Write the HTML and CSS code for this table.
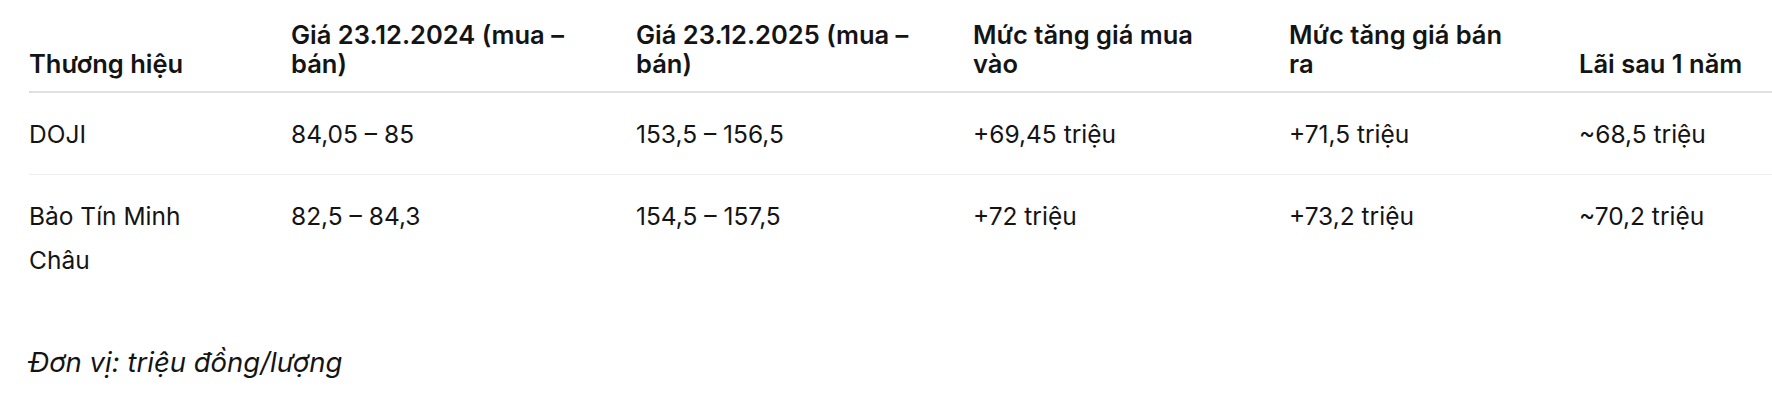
FILE: index.html
```html
<!DOCTYPE html>
<html lang="vi">
<head>
<meta charset="utf-8">
<title>Giá vàng</title>
<link rel="stylesheet" href="styles.css">
</head>
<body>
<div class="wrap">
  <table class="price-table">
    <colgroup>
      <col class="c1"><col class="c2"><col class="c3"><col class="c4"><col class="c5"><col class="c6">
    </colgroup>
    <thead>
      <tr>
        <th>Thương hiệu</th>
        <th>Giá 23.12.2024 (mua –<br>bán)</th>
        <th>Giá 23.12.2025 (mua –<br>bán)</th>
        <th>Mức tăng giá mua<br>vào</th>
        <th>Mức tăng giá bán<br>ra</th>
        <th>Lãi sau 1 năm</th>
      </tr>
    </thead>
    <tbody>
      <tr>
        <td>DOJI</td>
        <td>84,05 – 85</td>
        <td>153,5 – 156,5</td>
        <td>+69,45 triệu</td>
        <td>+71,5 triệu</td>
        <td>~68,5 triệu</td>
      </tr>
      <tr>
        <td>Bảo Tín Minh<br>Châu</td>
        <td>82,5 – 84,3</td>
        <td>154,5 – 157,5</td>
        <td>+72 triệu</td>
        <td>+73,2 triệu</td>
        <td>~70,2 triệu</td>
      </tr>
    </tbody>
  </table>
  <p class="note">Đơn vị: triệu đồng/lượng</p>
</div>
</body>
</html>
```

FILE: styles.css
```css
html, body {
  margin: 0;
  padding: 0;
  background: #ffffff;
}
body {
  font-family: Inter, "Noto Sans", "Liberation Sans", sans-serif;
  color: #141414;
}
.wrap {
  padding-left: 29px;
}
.price-table {
  width: 100%;
  border-collapse: collapse;
  table-layout: fixed;
}
.c1 { width: 262px; }
.c2 { width: 345px; }
.c3 { width: 337px; }
.c4 { width: 316px; }
.c5 { width: 290px; }
.price-table th {
  text-align: left;
  vertical-align: bottom;
  font-weight: 600;
  font-size: 25.5px;
  line-height: 29px;
  padding: 20px 0 13px 0;
  border-bottom: 2px solid #e0e0e0;
}
.price-table td {
  text-align: left;
  vertical-align: top;
  font-size: 24.5px;
  line-height: 44px;
  padding: 19px 0 18px 0;
}
.price-table tbody tr:first-child td {
  border-bottom: 1px solid #ededed;
}
.note {
  margin: 46px 0 0 0;
  font-style: italic;
  font-size: 27.5px;
  line-height: 32px;
}
```
